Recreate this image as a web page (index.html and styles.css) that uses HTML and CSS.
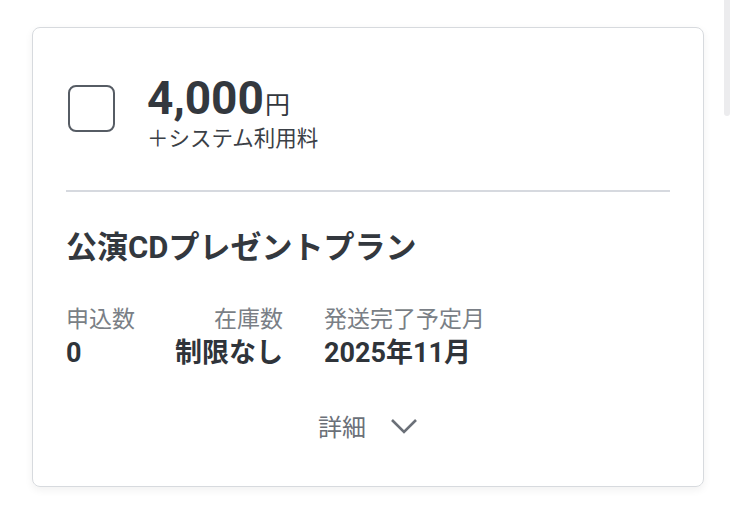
FILE: index.html
```html
<!DOCTYPE html>
<html lang="ja">
<head>
    <meta charset="UTF-8">
    <meta name="viewport" content="width=device-width, initial-scale=1.0">
    <title>プラン選択</title>
    <link rel="stylesheet" href="styles.css">
</head>
<body>
    <div class="page">
        <div class="plan-card">
            <div class="price-row">
                <span class="checkbox"></span>
                <div class="price">
                    <div class="amount">4,000<span class="yen">円</span></div>
                    <div class="fee">＋システム利用料</div>
                </div>
            </div>
            <hr class="divider">
            <h2 class="plan-title">公演CDプレゼントプラン</h2>
            <div class="stats">
                <div class="stat">
                    <div class="label">申込数</div>
                    <div class="value">0</div>
                </div>
                <div class="stat stock">
                    <div class="label">在庫数</div>
                    <div class="value">制限なし</div>
                </div>
                <div class="stat">
                    <div class="label">発送完了予定月</div>
                    <div class="value">2025年11月</div>
                </div>
            </div>
            <div class="details">
                <span>詳細</span>
                <svg width="28" height="18" viewBox="0 0 28 18">
                    <path d="M2 2 L14 14 L26 2" fill="none" stroke="#6b7078" stroke-width="2.6"/>
                </svg>
            </div>
        </div>
        <div class="scrollbar"></div>
    </div>
</body>
</html>
```

FILE: styles.css
```css
/* plan card */
body {
    margin: 0;
    background: #fff;
    font-family: Roboto, "Noto Sans CJK JP", sans-serif;
    color: #33383e;
}
.page {
    position: relative;
    height: 514px;
    padding: 27px 32px 0 32px;
    box-sizing: border-box;
}
.plan-card {
    width: 672px;
    height: 460px;
    box-sizing: border-box;
    border: 1.5px solid #d7dade;
    border-radius: 8px;
    box-shadow: 0 3px 8px rgba(0, 0, 0, 0.06);
    padding: 0 33px;
}
.price-row {
    display: flex;
    align-items: flex-start;
    padding-top: 48px;
}
.checkbox {
    width: 43px;
    height: 43px;
    margin-top: 9px;
    margin-left: 2px;
    border: 2px solid #565c64;
    border-radius: 8px;
}
.price {
    margin-left: 32px;
}
.amount {
    font-size: 46px;
    font-weight: 700;
    line-height: 44px;
    color: #33383e;
}
.yen {
    font-size: 25px;
    font-weight: 400;
    margin-left: 1px;
}
.fee {
    font-size: 21.5px;
    line-height: 22px;
    color: #3b4046;
}
.divider {
    border: none;
    border-top: 2px solid #d6d9df;
    margin: 40px 0 0 0;
}
.plan-title {
    margin: 36px 0 0 0;
    font-size: 31px;
    font-weight: 700;
    line-height: 40px;
}
.stats {
    display: flex;
    margin-top: 34px;
}
.stat.stock {
    text-align: right;
    margin-left: 40px;
    width: 177px;
}
.stat:last-child {
    margin-left: 41px;
}
.stat:first-child {
    width: 0;
    white-space: nowrap;
}
.label {
    font-size: 23px;
    color: #7a7f86;
    line-height: 36px;
}
.value {
    font-size: 27px;
    font-weight: 700;
    line-height: 30px;
    color: #2f343a;
}
.details {
    display: flex;
    justify-content: center;
    align-items: center;
    gap: 24px;
    margin-top: 40px;
    font-size: 24px;
    color: #6b7078;
}
.details svg {
    margin-top: 2px;
}
.scrollbar {
    position: absolute;
    top: 0;
    left: 724px;
    width: 6px;
    height: 116px;
    background: #ececee;
    border-radius: 0 0 3px 3px;
}
```
